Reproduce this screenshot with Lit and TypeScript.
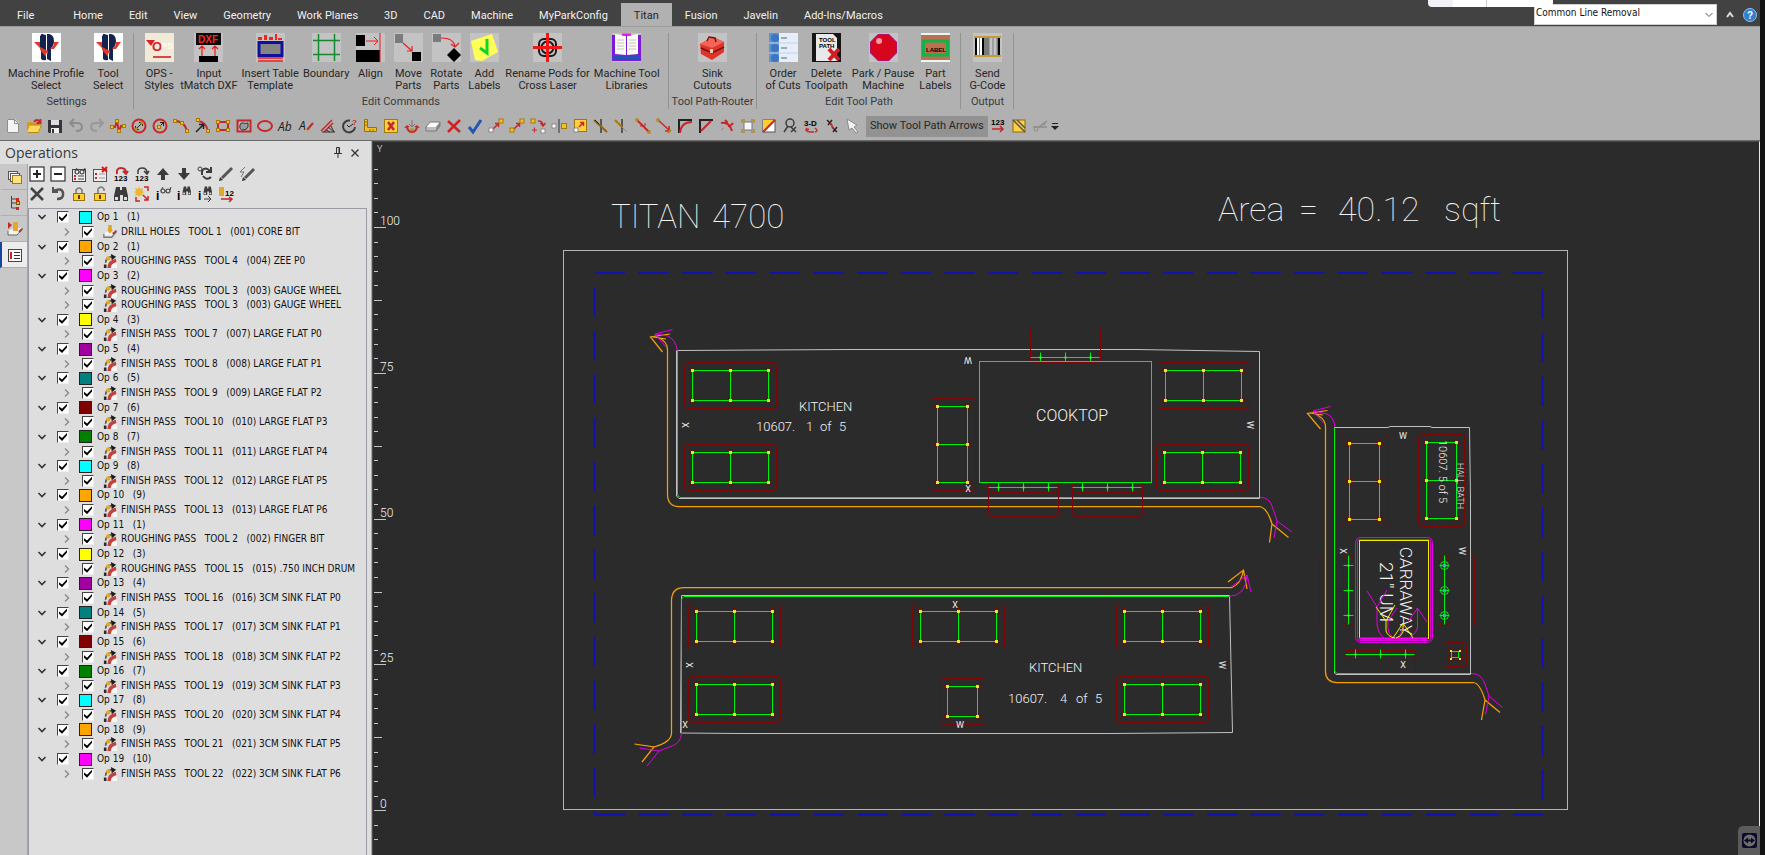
import { LitElement, html, css, svg, nothing } from "lit";
import { customElement, state } from "lit/decorators.js";
import { classMap } from "lit/directives/class-map.js";

/* ---------- small drawing helpers ---------- */
const p = (d: string, stroke: string, w = 1, fill = "none") =>
  svg`<path d=${d} stroke=${stroke} stroke-width=${w} fill=${fill}></path>`;
const f = (d: string, fill: string) => svg`<path d=${d} fill=${fill}></path>`;
const r = (x: number, y: number, w: number, h: number, fill: string, stroke = "none", sw = 1, rx = 0) =>
  svg`<rect x=${x} y=${y} width=${w} height=${h} fill=${fill} stroke=${stroke} stroke-width=${sw} rx=${rx}></rect>`;
const c = (x: number, y: number, rad: number, fill: string, stroke = "none", sw = 1) =>
  svg`<circle cx=${x} cy=${y} r=${rad} fill=${fill} stroke=${stroke} stroke-width=${sw}></circle>`;
const node = (x: number, y: number, s = 4) => r(x - s / 2, y - s / 2, s, s, "#f6c21c", "#a8780a", 1);
const white = (x: number, y: number, s = 4) => r(x - s / 2, y - s / 2, s, s, "#fff", "#8a8a8a", 1);

const RED = "#c8262a";
const DK = "#3c3c3c";

/* ---------- quick toolbar icons, 16 x 16 ---------- */
const quick: Record<string, unknown> = {
  "New": [f("M2 1h8l4 4v10H2z", "#f4f4f4"), p("M2.500 1.500h7l4 4v9h-11zM9.500 1.500v4h4", "#8d8d8d")],
  "Open": [f("M1 4h5l1 1h6v3H4L1 14z", "#d99b12"), f("M4 7h12l-3 8H1z", "#ffd75e"), p("M4 7h11.500l-3 7.500H1.500", "#b9860f"), p("M8 4q3-4 6 0M14.500 1v4h-4", RED, 2)],
  "Save": [f("M1 2h14v13H2l-1-1z", "#353539"), f("M4 2h8v5H4z", "#dedede"), f("M4 10h8v5H4z", "#f0f0f0"), f("M5 11h2v4H5z", "#353539")],
  "Undo": [p("M2 5h7q5 0 5 4t-6 4", "#8c8c8c", 2), p("M6 1L2 5l4 4", "#8c8c8c", 2)],
  "Redo": [p("M14 5H7Q2 5 2 9t6 4", "#979797", 2), p("M10 1l4 4-4 4", "#979797", 2)],
  "Spline": [p("M2 9h3L7 3l2 11 2-6h3", RED, 2), node(2, 9, 3), node(7, 3, 3), node(9, 13, 3), node(14, 8, 3)],
  "Circle by diameter": [c(8, 8, 6.5, "none", RED, 2), p("M6 10l5-5M8 4.500h3.500V8M4.500 8v3.500H8", "#222"), node(5, 11, 2), node(11, 5, 2)],
  "Circle by centre": [c(8, 8, 6.5, "none", RED, 2), p("M8 8l4-4M8 4.500h3.500V8", "#222"), node(7, 9, 3)],
  "Arc three points": [p("M2 3q10 0 12 11", RED, 2), node(2, 3, 3), node(9, 5, 3), node(14, 13, 3)],
  "Arc by centre": [p("M4 3q8 1 10 10", RED, 2), p("M2 14l7-7M5 6.500h4.500V11", "#222", 1.5), node(4, 2, 3), node(14, 13, 3)],
  "Rectangle": [r(3, 4, 10, 8, "none", RED, 2), node(3, 4, 3), node(13, 4, 3), node(3, 12, 3), node(13, 12, 3)],
  "Fill region": [r(1.5, 2.5, 13, 11, "#bbb", RED, 2), p("M4 7q-1 5 3 5t5-3V5Q9 6 7 5T4 7z", "#333", 1, "#999")],
  "Ellipse": [svg`<ellipse cx="8" cy="8" rx="7" ry="5" fill="none" stroke=${RED} stroke-width="2"></ellipse>`],
  "Text": [svg`<text class="ico-it" x="0" y="13" font-size="12">Ab</text>`],
  "Edit text": [svg`<text class="ico-it" x="0" y="12" font-size="12">A</text>`, p("M14 5L8 12", RED, 2), f("M6 14l1-3 2 1z", "#e9b020")],
  "Hatch": [p("M1 13L12 2M4 14l9-9", RED, 1.5), p("M2 14h13M8 9l6 5M11 8l3 6M6 12l4 2", "#333")],
  "Query": [p("M9 2.500A6 6 0 1 0 14 9", DK, 2), p("M8 9l4-3M6 7l2 2", "#222"), svg`<text class="ico-b" x="11" y="7" font-size="8" fill=${RED}>?</text>`],
  "Measure": [f("M2 1h4v9h9v4H2z", "#f3bf28"), p("M2.500 1.500v12h12v-4h-9v-8zM5 4H3M5 7H3M8 11v2M11 11v2", "#96700d")],
  "Delete boxed": [r(1.5, 1.5, 13, 13, "#ffce3d", "#a37a0c"), p("M5 4l6 8M11 4l-6 8", RED, 2.5)],
  "Snap": [p("M8 2v7M5 6l3 3 3-3", "#777"), p("M3 9q1 5 5 5t5-5", RED, 2), node(8, 12, 2), f("M0 10l3-3 3 2zM16 10l-3-3-3 2z", RED)],
  "Eraser": [f("M5 4h10l-4 5H1z", "#fafafa"), f("M1 9h10v4H1z", "#bdbdbd"), f("M11 9l4-5v4l-4 5z", "#8c8c8c"), p("M1 9v4h10l4-5V4H5z", "#777")],
  "Delete": [p("M2 3l12 11M14 2L2 14", "#cf2226", 2.5)],
  "Accept": [p("M2 9l4 5 8-12", "#2257b5", 3)],
  "Move": [p("M5 11l5-5M7 5.500h3.500V9", RED, 1.5), white(3, 12), node(13, 3)],
  "Copy": [p("M5 11l5-5M7 5.500h3.500V9", RED, 1.5), node(3, 12), node(13, 3)],
  "Place": [p("M5 11l5-5M7 5.500h3.500V9", RED, 1.5), node(3, 13, 3), node(13, 3, 3)],
  "Rotate": [node(3, 3), white(13, 13), p("M8 3q5 0 5 5M10.500 5l2.500 3 2.500-3", RED, 1.5), p("M2 12h5M4.500 9.500v5", RED)],
  "Mirror": [white(3, 8, 4), node(13, 8, 5), p("M8 1v14", "#333", 1)],
  "Scale": [r(2.5, 1.5, 12, 12, "#ffcf3c", "#9c760e"), white(4, 12, 4), p("M7 9l4-4M8 4.500h3.500V8", RED, 1.5)],
  "Trim": [p("M8 1v14", "#3a3a3a", 1.5), p("M1 2l13 12", "#8a6410", 2), p("M2 2l4 4", "#222")],
  "Extend": [p("M8 1v14", "#3a3a3a", 1.5), p("M1 2l7 7", "#a4790c", 2), p("M8 9l5 5", "#8a8a8a")],
  "Break": [p("M2 2l12 12", RED, 2), node(2, 2, 2), node(14, 14, 2), p("M5 8h5V5", RED)],
  "Join": [p("M2 2l11 10M13 8v5H9", RED, 1.5), node(2, 2, 2), p("M12 15l3-3", "#b8860b", 2)],
  "Fillet": [p("M2 15V2h13", "#222", 2), p("M3 15Q4 4 15 4", RED, 2)],
  "Chamfer": [p("M2 15V2h13", "#222", 2), p("M3 13L13 3", RED, 2)],
  "Explode": [p("M2 5q8-2 11 8M6 2q3 2 2 5M14 5q-2 3-5 3", RED, 2), p("M2 12l3-2", "#888")],
};
const quickView: Record<string, unknown> = {
  "Group": [r(4, 4, 8, 8, "#f6f6f6", "#777"), p("M5 2H2v3M11 2h3v3M5 14H2v-3M11 14h3v-3", "#b58a22", 1.5)],
  "Contrast": [r(2, 2, 12, 12, "#fff", "#555"), f("M2 2h12L2 14z", "#ffcc33"), p("M14 2L2 14", RED, 2)],
  "Find": [c(8, 5, 4, "none", DK, 1.5), p("M6 8l-4 6M9 9l5 5M14 9l-5 5", DK, 1.5)],
  "View 3-D": [svg`<text class="ico-b" x="1" y="8" font-size="8">3-D</text>`, p("M4 10q-3 3 3 4h4M12 10q4 3 0 4M6 11l-3 1", RED, 1.5)],
  "Remove points": [p("M3 2l5 5M8 2L4 7M8 9l5 5M13 9l-4 5", "#222", 1.5), p("M6 5l4 6", RED, 1.5)],
  "Pointer": [f("M2 1l10 6-3 2 4 5-2 1-4-5-3 2z", "#f2f2f2"), p("M2 1l10 6-3 2 4 5-2 1-4-5-3 2z", "#888")],
};
const quickTail: Record<string, unknown> = {
  "Number operations": [svg`<text class="ico-b" x="1" y="7" font-size="8">123</text>`, p("M2 11h11M10 8l3 3-3 3", RED, 1.5)],
  "Hatch area": [r(2, 2, 12, 12, "#ffcf3c", "#8d6a0c"), p("M2 2l12 12M6 2l8 8", "#555", 1.5)],
  "Cut": [p("M1 9h6l8-6M7 9h8", "#8c8c8c", 1.5), c(4, 11, 2, "none", "#8c8c8c"), c(12, 6, 1, "none", "#8c8c8c")],
};

/* ---------- ribbon icons, 29 x 29 ---------- */
const park = [r(0, 0, 29, 29, "#fff"),
  f("M9 1q1 0 5 1v25q-3 1-5-1zM15 1h2q5 1 5 7 0 5-3 7v13l-4-2z", "#14224f"),
  f("M8 3q2-2 3-2v16l-3-2z", "#14224f"),
  f("M2 9h6v6zM27 9h-5v3l-4 4h4zM8 14l8 4v3l-8-4zM14 18v6l-5-6z", "#e2382b")];
const plate = r(0, 0, 29, 29, "#c3c3c3");
const ribbonIcons: Record<string, unknown> = {
  park,
  ops: [r(0, 0, 29, 29, "#f1ead9"), f("M1 7h9l-4 6z", "#d8222a"), svg`<text class="ico-b" x="7" y="18" font-size="13" fill="#d8222a">O</text><text class="ico-b" x="16" y="16" font-size="9" fill="#fffaf0">PS</text>`, r(8, 23, 18, 2, "#d8464a")],
  dxf: [plate, r(2, 0, 25, 12, "#0b0b0b"), svg`<text class="ico-b" x="4" y="10" font-size="10" fill="#ff2424">DXF</text>`, r(5, 23, 19, 6, "#000"), p("M8 23V13M5 16l3-3 3 3M21 23V13M18 16l3-3 3 3", "#f01818", 1.2)],
  table: [plate, f("M2 4h4v3H2zM8 2h3v5H8zM13 4h4v3h-4zM19 1h2v6h-2zM22 5h4v2h-4z", "#f02424"), r(3, 9.5, 23, 13, "#848484", "#10109a", 3), p("M2 25h25M2 28h25", "#f01c1c", 1.5)],
  boundary: [plate, p("M6.500 1v27M22.500 1v27M1 7.500h27M1 21.500h27", "#148a30", 1.5)],
  align: [plate, r(0, 2, 9, 11, "#000"), r(0, 17, 24, 12, "#000"), p("M10 8h12M18 4l4 4-4 4", "#ec1c1c"), p("M24 0v29", "#ec1c1c")],
  move: [plate, r(1, 1, 8, 9, "#7b7b7b"), r(18, 19, 9, 9, "#000"), p("M9 10l9 8M18 13v5h-5", "#ec1c1c", 1.2)],
  rotate: [plate, r(1, 1, 8, 8, "#7b7b7b"), f("M22 15l7 7-7 7-7-7z", "#000"), p("M9 5q13 0 14 9M19 11l4 3 4-4", "#ec1c1c", 1.2)],
  label: [plate, f("M1 8L22 1l6 18-16 9-7-1z", "#ffff55"), p("M10 15l7 5V6", "#0fd42a", 3)],
  pods: [plate, r(6, 6, 17, 17, "none", "#1a1a1a", 2, 5), c(14.5, 14.5, 6, "none", "#1a1a1a", 2), p("M14.500 0v29M0 14.500h29", "#f01616", 3)],
  book: [plate, f("M0 2h29v26H0z", "#7a1bd8"), f("M2 22h12l1 3 1-3h11v4H2z", "#2453b8"), f("M3 1l11 2v19l-11-1zM26 1L15 3v19l11-1z", "#fbfbf4"), p("M5 7h7M5 10h7M5 13h7M5 16h7M17 7h7M17 10h7M17 13h7M17 16h7", "#c4c4bd"), p("M10 1.500h9", "#e01de0", 2)],
  sink: [plate, f("M2 11l13-7 11 5v10l-12 8-11-6z", "#e2332b"), f("M2 11l13-7 11 5-12 6z", "#f46458"), p("M9 8l2-4 6 1 1 4M3 15l11 5 12-6", "#75120f", 1.5), r(12, 16, 3, 4, "#eccdb0")],
  order: [r(0, 0, 29, 29, "#e6eefa"), r(0, 0, 10, 29, "#5a92d4"), c(6, 5, 4, "#3c76bf"), c(6, 15, 4, "#3c76bf"), c(6, 25, 4, "#3c76bf"), p("M12 5h6M12 15h6M12 25h6", "#9aa8bc", 2), p("M0 10h29M0 20h29", "#c2d2ea")],
  del: [r(0, 0, 29, 29, "#161616"), f("M4 1h17l4 4v23H4z", "#e9e9e9"), svg`<text class="ico-b" x="7" y="9" font-size="6">TOOL</text><text class="ico-b" x="7" y="15" font-size="6">PATH</text>`, p("M17 16l10 11M27 16L17 27", "#cf1d22", 4)],
  stop: [plate, f("M9 1h11l8 8v11l-8 8H9l-8-8V9z", "#b60d6c"), c(14.5, 14.5, 12.5, "#d8061c"), c(10, 8, 3, "#f79a9f")],
  part: [r(0, 0, 29, 29, "#b9714f"), p("M0 1h29M0 28h29", "#eef4ee", 2), r(2.5, 8, 24, 14, "none", "#18b04b", 3), svg`<text class="ico-b" x="5" y="19" font-size="6">LABEL</text>`],
  send: [plate, r(2, 4, 25, 20, "#7a7a7a"), p("M5 5v18M8 5v18", "#fff", 2), p("M3 5v18M10 5v18M26 5v18", "#000", 2), p("M18 5v18M22 5v18", "#c4c4c4", 3), p("M1 4h27M1 23h27", "#c19a3a", 2)],
};

interface RibbonButton { icon: string; lines: string[] }
const ribbon: { title: string; name: string; items: RibbonButton[] }[] = [
  { title: "Settings", name: "g-settings", items: [
    { icon: "park", lines: ["Machine Profile", "Select"] }, { icon: "park", lines: ["Tool", "Select"] }] },
  { title: "Edit Commands", name: "g-edit", items: [
    { icon: "ops", lines: ["OPS -", "Styles"] }, { icon: "dxf", lines: ["Input", "tMatch DXF"] },
    { icon: "table", lines: ["Insert Table", "Template"] }, { icon: "boundary", lines: ["Boundary"] },
    { icon: "align", lines: ["Align"] }, { icon: "move", lines: ["Move", "Parts"] },
    { icon: "rotate", lines: ["Rotate", "Parts"] }, { icon: "label", lines: ["Add", "Labels"] },
    { icon: "pods", lines: ["Rename Pods for", "Cross Laser"] }, { icon: "book", lines: ["Machine Tool", "Libraries"] }] },
  { title: "Tool Path-Router", name: "g-router", items: [{ icon: "sink", lines: ["Sink", "Cutouts"] }] },
  { title: "Edit Tool Path", name: "g-path", items: [
    { icon: "order", lines: ["Order", "of Cuts"] }, { icon: "del", lines: ["Delete", "Toolpath"] },
    { icon: "stop", lines: ["Park / Pause", "Machine"] }, { icon: "part", lines: ["Part", "Labels"] }] },
  { title: "Output", name: "g-output", items: [{ icon: "send", lines: ["Send", "G-Code"] }] },
];
const tabs = ["File", "Home", "Edit", "View", "Geometry", "Work Planes", "3D", "CAD", "Machine", "MyParkConfig", "Titan", "Fusion", "Javelin", "Add-Ins/Macros"];

/* ---------- operations panel ---------- */
const glasses = [c(4, 5, 2, "none", DK, 1.2), c(9, 5, 2, "none", DK, 1.2), p("M2 4l2-3M11 4l1-3", DK)];
const bino = (x: number, y: number, s: number) => svg`<g transform="translate(${x} ${y}) scale(${s})">${f("M3 1h4v3h2V1h4l2 9v5h-5V9H7v6H1v-5z", DK)}${r(2, 11, 3, 3, "#ddd")}${r(11, 11, 3, 3, "#ddd")}</g>`;
const panelIcons: [string, unknown][] = [
  ["Expand all", [r(1, 1, 14, 14, "#fff", "#333", 1.2), p("M4 8h8M8 4v8", "#222", 2)]],
  ["Collapse all", [r(1, 1, 14, 14, "#fff", "#333", 1.2), p("M4 8h8", "#222", 2)]],
  ["Preview", [r(1.5, 3.5, 13, 12, "#eee", "#444"), svg`<g transform="translate(2 1)">${glasses}</g>`, p("M3 10h2M3 13h2", RED, 2), p("M7 10h6M7 13h6", "#444")]],
  ["Clear list", [r(1.5, 3.5, 13, 12, "#eee", "#555"), p("M3 8h2M3 12h2", RED, 2), p("M7 8h6M7 12h6", "#999"), p("M10 1l5 5M15 1l-5 5", "#d61a1a", 2)]],
  ["Renumber", [p("M4 8Q3 2 8 2t5 5M10 5l3 3 2-3", RED, 2), svg`<text class="ico-b" x="1" y="15" font-size="8">123</text>`]],
  ["Order list", [p("M4 8Q3 2 8 2t5 5M10 5l3 3 2-3", DK, 1.5), svg`<text class="ico-b" x="1" y="15" font-size="8">123</text>`]],
  ["Move up", [f("M8 2l6 7h-4v5H6V9H2z", DK)]],
  ["Move down", [f("M8 14l6-7h-4V2H6v5H2z", DK)]],
  ["Refresh", [c(3, 3, 2, "none", DK), p("M13 5Q8 0 5 5v4M14 1v5H9M6 10q4 5 8 1", DK, 2)]],
  ["Edit", [p("M14 2L4 12", "#555", 3), f("M1 15l1-4 3 3z", "#333")]],
  ["Quick edit", [p("M15 3L6 12", "#555", 3), f("M3 15l1-4 3 3z", "#333"), p("M6 1L1 6h4l-3 5", "#777")]],
  ["Remove", [p("M2 2l12 12M14 2L2 14", "#444", 2.5)]],
  ["Undo", [p("M3 5q9-4 10 2t-6 6", "#555", 2.5), p("M3 1v5h5", "#555", 2)]],
  ["Lock", [r(2.5, 7.5, 11, 7, "#ffcf2e", "#96700d"), p("M5 7V4q3-4 6 0v3", "#7a7a7a", 1.5), r(7, 9, 2, 4, "#5b4208")]],
  ["Unlock", [r(2.5, 7.5, 11, 7, "#ffcf2e", "#96700d"), p("M6 7V3q3-4 6 0v2", "#7a7a7a", 1.5), r(7, 9, 2, 4, "#5b4208")]],
  ["Search", [bino(0, 0, 1)]],
  ["Star tool", [f("M5 0l1 3 3-1-1 3 3 1-3 1 1 3-3-1-1 3-1-3-3 1 1-3-2-1 2-1-1-3 3 1z", "#f1b52a"), p("M9 9l5 5M14 10v4h-4M14 5V1h-4M2 11v4h4", RED, 1.5)]],
  ["Inspect", [svg`<text class="ico-b" x="1" y="14" font-size="12">i</text><g transform="translate(4 0)">${glasses}</g>`]],
  ["Inspect find", [svg`<text class="ico-b" x="1" y="14" font-size="12">i</text>`, bino(6, 0, 0.6)]],
  ["Inspect next", [svg`<text class="ico-b" x="1" y="14" font-size="12">i</text>`, bino(6, 0, 0.6), p("M7 13h7M11 10l3 3-3 3", DK)]],
  ["Tool numbers", [f("M1 1h5v9H1z", "#e0aa28"), svg`<text class="ico-b" x="7" y="10" font-size="8">12</text>`, p("M3 13h11M11 11l3 2-3 3", RED, 1.5)]],
];
const dockIcons: [string, unknown][] = [
  ["Layers", [r(1.5, 2.5, 9, 8, "#eee", "#555"), r(3.5, 4.5, 9, 8, "#fff", "#555"), r(5.5, 6.5, 9, 8, "#ffe17e", "#a8780a")]],
  ["Features", [p("M4.500 1v12H9M4.500 4H9M4.500 8H9", "#444"), r(9, 3, 3, 3, RED), r(9.5, 6.5, 3, 3, "#f2b51c", "#7a5a00"), r(9, 12, 3, 3, RED)]],
  ["Tooling", [f("M1 1l4 3-4 4z", RED), f("M1 10l6-3h9l-6 7H1z", "#f2f2f2"), p("M1 10v4h9l6-7", "#666"), f("M6 1h5v9H6z", "#e3a92a"), p("M12 11l3-3", RED, 2)]],
  ["Operations", [r(1.5, 2.5, 13, 12, "#fff", "#444"), p("M4 5v7", RED, 2), p("M7 5.500h6M7 8.500h6M7 11.500h6", "#333")]],
];
const passIcon = [
  f("M8 16q0-6 8-7v7z", "#f6f6f6"),
  p("M2.500 16v-4", "#2a2a2a", 3), p("M3 10q0-6 7-7", "#5a5a5a", 2),
  p("M7 16Q7 9 15 7.500", "#c4423c", 4),
  f("M9 0l6 3-5 4z", "#1c1c1c"), c(6, 5, 2.5, "#e9a91f"),
];
const drillIcon = [f("M1 10l4-3h9l-4 5H1z", "#f4f4f4"), p("M1 10v4h9l5-6v-2", "#777", 1.5), f("M6 0h4v4l1 2-3 4-3-4 1-2z", "#e0a321"), p("M11 10l4-3", RED, 2)];

const cyan = "#00ffff", orange = "#ffa500", magenta = "#ff00ff", yellow = "#ffff00", purple = "#a000a0", teal = "#008080", maroon = "#800000", green = "#008000";
interface Op { n: number; count: number; color: string; passes: string[] }
const ops: Op[] = [
  { n: 1, count: 1, color: cyan, passes: ["DRILL HOLES   TOOL 1   (001) CORE BIT"] },
  { n: 2, count: 1, color: orange, passes: ["ROUGHING PASS   TOOL 4   (004) ZEE P0"] },
  { n: 3, count: 2, color: magenta, passes: ["ROUGHING PASS   TOOL 3   (003) GAUGE WHEEL", "ROUGHING PASS   TOOL 3   (003) GAUGE WHEEL"] },
  { n: 4, count: 3, color: yellow, passes: ["FINISH PASS   TOOL 7   (007) LARGE FLAT P0"] },
  { n: 5, count: 4, color: purple, passes: ["FINISH PASS   TOOL 8   (008) LARGE FLAT P1"] },
  { n: 6, count: 5, color: teal, passes: ["FINISH PASS   TOOL 9   (009) LARGE FLAT P2"] },
  { n: 7, count: 6, color: maroon, passes: ["FINISH PASS   TOOL 10   (010) LARGE FLAT P3"] },
  { n: 8, count: 7, color: green, passes: ["FINISH PASS   TOOL 11   (011) LARGE FLAT P4"] },
  { n: 9, count: 8, color: cyan, passes: ["FINISH PASS   TOOL 12   (012) LARGE FLAT P5"] },
  { n: 10, count: 9, color: orange, passes: ["FINISH PASS   TOOL 13   (013) LARGE FLAT P6"] },
  { n: 11, count: 1, color: magenta, passes: ["ROUGHING PASS   TOOL 2   (002) FINGER BIT"] },
  { n: 12, count: 3, color: yellow, passes: ["ROUGHING PASS   TOOL 15   (015) .750 INCH DRUM"] },
  { n: 13, count: 4, color: purple, passes: ["FINISH PASS   TOOL 16   (016) 3CM SINK FLAT P0"] },
  { n: 14, count: 5, color: teal, passes: ["FINISH PASS   TOOL 17   (017) 3CM SINK FLAT P1"] },
  { n: 15, count: 6, color: maroon, passes: ["FINISH PASS   TOOL 18   (018) 3CM SINK FLAT P2"] },
  { n: 16, count: 7, color: green, passes: ["FINISH PASS   TOOL 19   (019) 3CM SINK FLAT P3"] },
  { n: 17, count: 8, color: cyan, passes: ["FINISH PASS   TOOL 20   (020) 3CM SINK FLAT P4"] },
  { n: 18, count: 9, color: orange, passes: ["FINISH PASS   TOOL 21   (021) 3CM SINK FLAT P5"] },
  { n: 19, count: 10, color: magenta, passes: ["FINISH PASS   TOOL 22   (022) 3CM SINK FLAT P6"] },
];

/* ---------- CAD drawing ---------- */
/* A suction pod: green frame split in two, yellow corner points, dark red clearance. */
const pod = (x: number, y: number, w: number, h: number, split: "v" | "h" | "" = "v") => {
  const xs = split === "v" ? [x, x + w / 2, x + w] : [x, x + w];
  const ys = split === "h" ? [y, y + h / 2, y + h] : [y, y + h];
  const pts = xs.flatMap((a) => ys.map((b) => [a, b]));
  return svg`<rect class="clear" x=${x - 8} y=${y - 8} width=${w + 16} height=${h + 16} rx="3"></rect>
    ${pts.map(([a, b]) => svg`<circle class="clear" cx=${a} cy=${b} r="3"></circle>`)}
    <rect class="lime" x=${x} y=${y} width=${w} height=${h}></rect>
    ${split === "v" ? svg`<path class="lime" d="M${x + w / 2} ${y}v${h}"></path>` : nothing}
    ${split === "h" ? svg`<path class="lime" d="M${x} ${y + h / 2}h${w}"></path>` : nothing}
    ${pts.map(([a, b]) => svg`<rect class="pt" x=${a - 1.5} y=${b - 1.5} width="3" height="3"></rect>`)}`;
};
/* A clamp: green bar with three ticks; `out` is how far its body reaches past the edge. */
const clamp = (x: number, y: number, out: number, vertical = false, rings = false) => {
  const t = [10, 35, 60];
  const o = Math.abs(out);
  const body = vertical
    ? svg`<rect class="clear" x=${out < 0 ? x - o : x - 5} y=${y} width=${o + 5} height="70" rx="2"></rect><rect class="clear" x=${x - 5} y=${y} width="10" height="70" rx="4"></rect>`
    : svg`<rect class="clear" x=${x} y=${out < 0 ? y - o : y - 4} width="70" height=${o + 4} rx="2"></rect><rect class="clear" x=${x} y=${y - 4} width="70" height="9" rx="4"></rect>`;
  return svg`${body}
    <path class="lime" d=${vertical ? `M${x} ${y}v69` : `M${x} ${y}h69`}></path>
    ${t.map((k) => vertical
      ? svg`<path class="lime" d="M${x - 5} ${y + k}h10"></path>${rings ? svg`<circle class="lime" cx=${x} cy=${y + k} r="4"></circle><circle cx=${x} cy=${y + k} r="2" fill="#18c890"></circle>` : svg`<rect class="tick" x=${x - 1} y=${y + k - 1} width="2" height="2"></rect>`}`
      : svg`<path class="lime" d="M${x + k} ${y - 5}v9"></path><rect class="tick" x=${x + k - 1} y=${y - 1} width="2" height="2"></rect>`)}`;
};
const mark = (t: string, x: number, y: number, rot = 0) =>
  svg`<text class="mark" transform="translate(${x} ${y}) rotate(${rot})" text-anchor="middle" y="3">${t}</text>`;

const ruler = Array.from({ length: 47 }, (_, k) => k - 4).map((i) => ({
  y: Math.round(227 + i * 14.58) + 0.5,
  len: i % 10 === 0 ? 12 : i % 5 === 0 ? 8 : 4,
  label: i % 10 === 0 ? String(100 - i * 2.5) : "",
}));

const drawing = svg`
  ${ruler.map((t) => svg`<path d="M374 ${t.y}h${t.len}" stroke="#c4c4c4"></path>${t.label ? svg`<text class="cad" x="380" y=${t.y - 3} font-size="12">${t.label}</text>` : nothing}`)}
  <text class="cad" x="377" y="152" font-size="9">Y</text>

  <text class="cad big" y="228" font-size="33"><tspan x="611">TITAN </tspan><tspan x="712">4700</tspan></text>
  <text class="cad big" y="221" font-size="34"><tspan x="1218">Area </tspan><tspan x="1299">= </tspan><tspan x="1338">40.12 </tspan><tspan x="1444">sqft</tspan></text>

  <rect x="563.5" y="250.5" width="1004" height="559" fill="none" stroke="#b4b4b4"></rect>
  <g fill="none" stroke="#1212b4" stroke-width="2">
    <path d="M595 273H1543" stroke-dasharray="30 13.710"></path>
    <path d="M594.500 287V797M1542.500 289V800" stroke-dasharray="29.500 14.230"></path>
    <path d="M1543 814.500H600" stroke-dasharray="30 13.710"></path>
    <path d="M594.500 812v2.500h26"></path>
  </g>

  <!-- kitchen 1 of 5 -->
  <path class="edge" d="M676.500 350.500L850 349.500H1136L1259.500 351.500V498.500H679L676.500 496Z"></path>
  <path class="lime" d="M677.500 351V495L680 497.500H1259"></path>
  <path class="org" d="M657 337Q667.500 341 667.500 350V494Q667.500 506.500 679 506.500H1259Q1267 507 1272 524M670 334L650.500 337L662.500 352M653 337L666 339M1288.500 537.500L1272 524L1269.500 542.500"></path>
  <path class="mag" d="M677.500 351Q676 340 668 336L655 334M672.500 329.500L655 334L666 347M1260 497.500Q1269 497 1272 506Q1275 514 1277 521M1292 532L1277 521L1274 538"></path>
  ${pod(692.5, 370.5, 76, 30)}${pod(692.5, 452.5, 76, 30)}${pod(937.5, 406.5, 30, 76, "h")}
  ${pod(1165.5, 370.5, 76, 30)}${pod(1164.5, 452.5, 76, 30)}
  ${clamp(1030.5, 357.5, -30)}${clamp(988.5, 487.5, 29)}${clamp(1072.5, 487.5, 29)}
  <rect class="lime" x="979.5" y="361.5" width="172" height="121"></rect>
  <text class="cad" x="799" y="411" font-size="13">KITCHEN</text>
  <text class="cad" y="431" font-size="13"><tspan x="756">10607. </tspan><tspan x="806">1 </tspan><tspan x="820">of </tspan><tspan x="839">5</tspan></text>
  <text class="cad" x="1036" y="421" font-size="16">COOKTOP</text>
  ${mark("X", 685, 425, 90)}${mark("W", 968, 360, 180)}${mark("X", 968, 489)}${mark("W", 1250, 425, 90)}

  <!-- kitchen 4 of 5 -->
  <path class="edge" d="M681.500 595.500H1229.500L1232.500 732.500L1110 733.500H740L680.500 733Z"></path>
  <path class="lime" d="M681.500 732V599L684 596.500H1229"></path>
  <path class="org" d="M654 747Q671.500 742 671.500 733V600Q672 587.500 684 587.500H1232Q1241 584 1243.500 570M634.500 744L654 747L642 762M1228 582L1243.500 570L1247 589"></path>
  <path class="mag" d="M681.500 733Q681 743 672 746L659 751M639.500 748L659 751L647 766M1229 596.500Q1246 596 1247 575M1231 587L1247 575L1251 592"></path>
  ${pod(696.5, 611.5, 76, 30)}${pod(920.5, 611.5, 76, 30)}${pod(1124.5, 611.5, 76, 30)}
  ${pod(696.5, 684.5, 76, 30)}${pod(1124.5, 684.5, 76, 30)}${pod(947.5, 686.5, 30, 30, "")}
  <text class="cad" x="1029" y="672" font-size="13">KITCHEN</text>
  <text class="cad" y="703" font-size="13"><tspan x="1008">10607. </tspan><tspan x="1060">4 </tspan><tspan x="1076">of </tspan><tspan x="1095">5</tspan></text>
  ${mark("X", 689, 665, 90)}${mark("X", 955, 605)}${mark("X", 685, 725)}${mark("W", 960, 725)}${mark("W", 1222, 665, 90)}

  <!-- hall bath 5 of 5 -->
  ${pod(1349.5, 443.5, 30, 76, "h")}${pod(1426.5, 442.5, 30, 76, "h")}
  ${clamp(1348.5, 555.5, -29, true)}${clamp(1444.5, 555.5, 30, true, true)}${clamp(1345.5, 654.5, 28)}
  <path class="edge" d="M1334.500 427.500H1388L1390 426.500H1430L1432 427.500H1469.500L1470.500 500V674.500H1336L1334.500 673Z"></path>
  <path class="lime" d="M1334.500 428V671L1337 673.500H1470"></path>
  <path class="org" d="M1312 413Q1325.500 417 1325.500 427V672Q1326 682.500 1337 682.500H1473Q1480 683 1485 700M1327.500 410.500L1307.500 413.500L1320.500 429M1310 413L1323 415M1500 712.500L1485 700L1481.500 720"></path>
  <path class="mag" d="M1335 427Q1334 417 1327 414L1313 411M1330.500 406.500L1313 411L1323.500 423M1471 673.500Q1481 673 1485 684L1489 696M1502.500 707.500L1489 696L1485.500 714.500"></path>
  <rect class="clear" x="1443.500" y="642.500" width="23" height="24" rx="3"></rect>
  ${[[1450.5, 650.5], [1459.5, 650.5], [1450.5, 658.5], [1459.5, 658.5]].map(([a, b]) => svg`<circle class="clear" cx=${a} cy=${b} r="3"></circle>`)}
  <rect class="lime" x="1451.500" y="651.500" width="7" height="6"></rect>
  ${[[1450, 650], [1459, 650], [1450, 658], [1459, 658]].map(([a, b]) => svg`<rect class="pt" x=${a} y=${b} width="2" height="2"></rect>`)}
  <text class="cad" transform="translate(1400 547) rotate(90)" font-size="17">CARRAWAY</text>
  <text class="cad" transform="translate(1380 562) rotate(90)" font-size="19">21" UM</text>
  <text class="cad" transform="translate(1439 440) rotate(90)" font-size="11">10607. 5 of 5</text>
  <text class="cad" transform="translate(1457 463) rotate(90)" font-size="9">HALL BATH</text>
  <rect class="mag" x="1355.500" y="537.500" width="77" height="105" rx="5"></rect>
  <rect class="mag" x="1357.500" y="539.500" width="73" height="101" rx="2"></rect>
  <rect class="yel" x="1359.500" y="540.500" width="69" height="98"></rect>
  <path d="M1359 638.500H1428" stroke="#ff00ff" stroke-width="2"></path>
  <path class="mag" d="M1367 591L1377 607L1387 590M1377 607V625Q1379 638 1390 641M1397 608L1388 621M1427 622L1417.500 608L1408 622M1417.500 608V628Q1414 638 1402 641M1396 640Q1402 634 1404 624M1388 621Q1386 636 1397 640"></path>
  <path class="yel" d="M1376 607L1386 621L1395 605M1386 621V631Q1388 637 1395 638M1393 638L1403 623L1413 638M1403 623V632Q1401 637 1396 638"></path>
  ${mark("W", 1403, 436)}${mark("X", 1343, 551, 90)}${mark("W", 1462, 551, 90)}${mark("X", 1403, 665)}
`;

@customElement("app-root")
export class AppRoot extends LitElement {
  @state() private tab = "Titan";
  @state() private arrows = true;

  static styles = css`
    :host {
      display: flex; flex-direction: column; height: 100vh; overflow: hidden;
      border-right: 5px solid #131313; box-sizing: border-box;
      background: #b1b1b1; color: #262626;
      font: 11px/12px Roboto, "Liberation Sans", sans-serif;
    }
    * { box-sizing: border-box; }
    button, select, input { font: inherit; color: inherit; margin: 0; }
    button { border: 0; padding: 0; background: none; }
    svg { display: block; flex: none; overflow: visible; }
    .ico-b { font-family: "Liberation Sans", sans-serif; font-weight: 700; }
    .ico-it { font-family: "Open Sans", sans-serif; font-style: italic; fill: #1a1a1a; }

    .menubar { display: flex; align-items: stretch; height: 26px; padding-top: 3px; background: #424242; position: relative; }
    .tab { padding: 2px 13px 0; color: #f0f0f0; line-height: 21px; white-space: nowrap; }
    .tab:first-child { padding-left: 17px; padding-right: 26px; }
    .tab.on { background: #b1b1b1; color: #262626; }
    .corner { display: flex; align-items: center; gap: 8px; margin-left: auto; padding-right: 3px; }
    .combo { position: relative; display: flex; width: 183px; height: 21px; }
    .combo select { width: 100%; appearance: none; border: 1px solid #d0d0d0; border-radius: 0; background: #fff; color: #111; padding: 0 20px 4px 1px; font: 10px/14px "DejaVu Sans Condensed", "DejaVu Sans", sans-serif; }
    .combo svg { position: absolute; right: 4px; top: 8px; pointer-events: none; }
    .peek { position: absolute; top: 0; right: 207px; width: 125px; height: 7px; border-radius: 0 0 4px 4px; background: linear-gradient(90deg, #f1f2f7 25px, #fff 25px 58px, #ccc 58px 59px, #fff 59px); }

    .ribbon { display: flex; height: 86px; padding: 6px 0 3px; border-top: 1px solid #9a9a9a; }
    .group { display: flex; flex-direction: column; justify-content: space-between; align-items: center; border-right: 1px solid #929292; padding: 0 6px; }
    .items { display: flex; }
    .g-settings .items { gap: 3px; }
    .large { display: flex; flex-direction: column; align-items: center; gap: 6px; min-width: 38px; padding: 0 2px; white-space: nowrap; }
    .cap { display: block; }
    .title { color: #3a3a3a; line-height: 14px; white-space: nowrap; }
    .group.g-router { padding: 0 3px; }

    .quick { display: flex; align-items: center; height: 29px; padding-left: 2px; border-bottom: 1px solid #6a6a6a; }
    .q { display: grid; place-items: center; width: 21px; height: 21px; flex: none; }
    .toggle { height: 21px; margin: 0 0 0 3px; padding: 0 4px; background: #929292; white-space: nowrap; }

    .work { display: flex; flex: 1; min-height: 0; }
    .panel { display: flex; flex-direction: column; width: 372px; flex: none; background: #dedede; border-right: 1px solid #a6a6a6; }
    .head { display: flex; align-items: center; gap: 9px; height: 23px; padding: 0 12px 0 5px; }
    .head h2 { flex: 1; margin: 0; font: 14px/18px "Open Sans", sans-serif; color: #3a3a3a; }
    .body { display: flex; flex: 1; min-height: 0; }
    .dock { display: flex; flex-direction: column; width: 28px; background: #c8c8c8; border-right: 1px solid #a2a2a8; }
    .dock button { display: grid; place-items: center; height: 26px; border-bottom: 1px solid #b0b0b0; border-left: 2px solid transparent; }
    .dock button.on { background: #ececec; border-left-color: #1546a0; }
    .ops { display: flex; flex-direction: column; flex: 1; padding-right: 4px; min-width: 0; }
    .bar { display: grid; grid-template-columns: repeat(11, 21px); grid-auto-rows: 20px; padding-bottom: 4px; }
    .bar .q { width: 18px; height: 20px; }
    .tree { flex: 1; margin: 0; padding: 1px 0 74px; list-style: none; border: 1px solid #9c9ca4; border-bottom: 0; display: grid; grid-auto-rows: 1fr; overflow: hidden; font: 10px/14px "DejaVu Sans Condensed", "DejaVu Sans", sans-serif; }
    .row { display: flex; align-items: center; padding-left: 7px; min-height: 0; }
    .row.sub { padding-left: 32px; }
    .row .arrow { display: grid; place-items: center; width: 12px; height: 12px; margin-right: 9px; }
    input[type="checkbox"] { appearance: none; width: 12px; height: 12px; flex: none; background: #fff; border: 1px solid; border-color: #444 #eee #eee #444; display: grid; place-items: center; }
    input[type="checkbox"]:checked::before { content: ""; width: 8px; height: 8px; background: #000; clip-path: polygon(0 35%, 38% 65%, 100% 0, 100% 30%, 38% 100%, 0 65%); }
    .row label { display: flex; align-items: center; gap: 5px; margin-left: 10px; white-space: pre; color: #111; }
    .row.sub label { gap: 4px; margin-left: 9px; }
    .swatch { width: 13px; height: 13px; border: 1px solid #222; }

    .canvas { flex: 1; min-width: 0; position: relative; background: #2b2b2b; border: solid #4a4a4a; border-width: 1px 0 0 1px; border-right: 1px solid #e8e8e8; }
    .canvas > svg { width: 100%; height: 100%; overflow: hidden; }
    .cad { font-family: Roboto, sans-serif; font-weight: 300; fill: #f4f4f4; white-space: pre; }
    .cad.big { font-weight: 100; }
    .mark { font: 400 9px Roboto, sans-serif; fill: #f0f0f0; }
    .edge { fill: none; stroke: #c0c0c0; }
    .lime { fill: none; stroke: #00f00c; }
    .tick { fill: #30ff30; }
    .clear { fill: none; stroke: #7a0606; }
    .org { fill: none; stroke: #f5a00a; stroke-width: 1.25; }
    .mag { fill: none; stroke: #e000e0; }
    .yel { fill: none; stroke: #f0f000; }
    .pt { fill: #d8f020; }
    .remote { position: absolute; right: -1px; bottom: 0; display: grid; place-items: center; width: 22px; height: 29px; background: #5b5b5b; border-radius: 5px 0 0 0; }
  `;

  private quickButton(name: string, art: unknown) {
    return html`<button class="q" aria-label=${name}><svg width="16" height="16" viewBox="0 0 16 16">${art}</svg></button>`;
  }

  private opRow(op: Op) {
    const id = `op${op.n}`;
    return html`
      <li class="row">
        <button class="arrow" aria-label="Collapse operation ${op.n}"><svg width="8" height="6" viewBox="0 0 8 6">${p("M0.500 1L4 4.500L7.500 1", "#333", 1.6)}</svg></button>
        <input type="checkbox" id=${id} checked>
        <label for=${id}><span class="swatch" style="background:${op.color}"></span>Op ${op.n}   (${op.count})</label>
      </li>
      ${op.passes.map((text, k) => html`
        <li class="row sub">
          <button class="arrow" aria-label="Expand pass"><svg width="6" height="8" viewBox="0 0 6 8">${p("M1 0.500L4.500 4L1 7.500", "#8a8a8a", 1.4)}</svg></button>
          <input type="checkbox" id="${id}-${k}" checked>
          <label for="${id}-${k}"><svg width="14" height="14" viewBox="0 0 16 16">${text.startsWith("DRILL") ? drillIcon : passIcon}</svg>${text}</label>
        </li>`)}`;
  }

  render() {
    return html`
      <nav class="menubar" aria-label="Ribbon tabs">
        ${tabs.map((t) => html`<button class="tab ${classMap({ on: t === this.tab })}" @click=${() => (this.tab = t)}>${t}</button>`)}
        <div class="corner">
          <div class="combo">
            <select aria-label="Command search"><option>Common Line Removal</option></select>
            <svg width="8" height="6" viewBox="0 0 8 6">${p("M0.500 1L4 4.500L7.500 1", "#555")}</svg>
          </div>
          <button aria-label="Minimise ribbon"><svg width="10" height="8" viewBox="0 0 10 8">${p("M2 6l3-4 3 4", "#ddd", 2)}</svg></button>
          <button aria-label="Help"><svg width="14" height="14" viewBox="0 0 14 14">${c(7, 7, 6.5, "#2f7fd0", "#8fc0ee")}<text class="ico-b" x="4" y="11" font-size="10" fill="#fff">?</text></svg></button>
        </div>
        <div class="peek"></div>
      </nav>

      <section class="ribbon">
        ${ribbon.map((g) => html`
          <div class="group ${g.name}">
            <div class="items">
              ${g.items.map((b) => html`<button class="large"><svg width="29" height="29" viewBox="0 0 29 29">${ribbonIcons[b.icon]}</svg><span>${b.lines.map((l) => html`<span class="cap">${l}</span>`)}</span></button>`)}
            </div>
            <div class="title">${g.title}</div>
          </div>`)}
      </section>

      <div class="quick">
        ${Object.entries({ ...quick, ...quickView }).filter(([n]) => n !== "Place").map(([n, a]) => this.quickButton(n, a))}
        <button class="toggle" aria-pressed=${this.arrows} @click=${() => (this.arrows = !this.arrows)}>Show Tool Path Arrows</button>
        ${Object.entries(quickTail).map(([n, a]) => this.quickButton(n, a))}
        <button aria-label="More tools"><svg width="8" height="8" viewBox="0 0 8 8">${p("M1 1.500h6", "#222")}${f("M0 4h8L4 8z", "#222")}</svg></button>
      </div>

      <main class="work">
        <aside class="panel">
          <div class="head">
            <h2>Operations</h2>
            <button aria-label="Pin panel"><svg width="8" height="11" viewBox="0 0 8 11">${p("M2.500 6V0.500h3V6M0 6.500h8M4 7v4", "#333")}${p("M5 1v5", "#333")}</svg></button>
            <button aria-label="Close panel"><svg width="8" height="8" viewBox="0 0 8 8">${p("M0.500 0.500l7 7M7.500 0.500l-7 7", "#333", 1.3)}</svg></button>
          </div>
          <div class="body">
            <div class="dock">
              ${dockIcons.map(([n, a], i) => html`<button class=${classMap({ on: i === 3 })} aria-label=${n}><svg width="16" height="16" viewBox="0 0 16 16">${a}</svg></button>`)}
            </div>
            <div class="ops">
              <div class="bar">${panelIcons.map(([n, a]) => this.quickButton(n, a))}</div>
              <ul class="tree">${ops.map((o) => this.opRow(o))}</ul>
            </div>
          </div>
        </aside>
        <section class="canvas" aria-label="Drawing area">
          <svg viewBox="373 142 1386 713" preserveAspectRatio="xMinYMin meet">${drawing}</svg>
          <button class="remote" aria-label="Remote session"><svg width="15" height="15" viewBox="0 0 15 15">${r(0, 0, 15, 15, "#0a0a2c", "none", 0, 2)}${c(7.5, 7.5, 6, "#6e6e6e")}${f("M2 7.500l4-3v2h3v-2l4 3-4 3v-2H6v2z", "#0a0a2c")}</svg></button>
        </section>
      </main>`;
  }
}
